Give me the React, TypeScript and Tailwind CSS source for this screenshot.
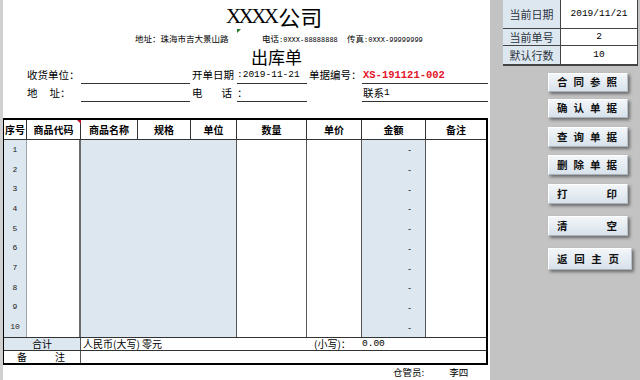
import React from 'react';

const cjk = "font-['Noto_Sans_CJK_SC',sans-serif]";
const mono = "font-['Liberation_Mono','Noto_Sans_CJK_SC',monospace]";

const rows = [1, 2, 3, 4, 5, 6, 7, 8, 9, 10];

const buttons: { chars: string[]; mt: string; h: string; w: string }[] = [
  { chars: ['合', '同', '参', '照'], mt: 'mt-[7px]', h: 'h-[19px]', w: 'w-[80px]' },
  { chars: ['确', '认', '单', '据'], mt: 'mt-[7px]', h: 'h-[19px]', w: 'w-[80px]' },
  { chars: ['查', '询', '单', '据'], mt: 'mt-[9px]', h: 'h-[20px]', w: 'w-[80px]' },
  { chars: ['删', '除', '单', '据'], mt: 'mt-[8px]', h: 'h-[20px]', w: 'w-[80px]' },
  { chars: ['打', '印'], mt: 'mt-[9px]', h: 'h-[20px]', w: 'w-[80px]' },
  { chars: ['清', '空'], mt: 'mt-[12px]', h: 'h-[20px]', w: 'w-[80px]' },
  { chars: ['返', '回', '主', '页'], mt: 'mt-[12px]', h: 'h-[22px]', w: 'w-[84px]' },
];

function HeaderCell({ w, label, last }: { w: string; label: string; last?: boolean }) {
  return (
    <div
      className={`${w} h-full flex items-center justify-center whitespace-nowrap text-[10px] font-bold text-black ${
        last ? '' : 'border-r border-[#333]'
      }`}
    >
      {label}
    </div>
  );
}

function Sheet() {
  return (
    <div className={`w-[487px] h-full bg-white flex flex-col ${cjk} text-black`}>
      {/* company title */}
      <div className="h-[32px] flex items-center pl-[223px] whitespace-nowrap">
        <span className="font-['Liberation_Serif',serif] text-[21px] tracking-[-2.6px] leading-none">XXXX</span>
        <span className="text-[22px] leading-none ml-[2px]">公司</span>
      </div>

      {/* address line */}
      <div className="relative h-[13px] flex items-center pl-[132px] text-[8.5px] leading-none whitespace-nowrap">
        <span className="w-[127px]">地址：珠海市吉大景山路</span>
        <span className="w-[85px]">
          电话<span className={`${mono} text-[7px]`}>:0XXX-88888888</span>
        </span>
        <span>
          传真<span className={`${mono} text-[7px]`}>:0XXX-99999999</span>
        </span>
        <span className="absolute left-[234px] top-[-3px] w-0 h-0 border-t-[4px] border-r-[4px] border-t-[#1f7a1f] border-r-transparent" />
      </div>

      {/* doc title */}
      <div className="h-[22px] flex items-center pl-[248px] text-[17px] leading-none">出库单</div>

      {/* form row 1 */}
      <div className="h-[17px] flex items-stretch text-[10.5px] leading-none whitespace-nowrap">
        <div className="w-[78px] flex items-center pl-[24px]">收货单位：</div>
        <div className="w-[109px] border-b border-[#333]" />
        <div className="w-[47px] flex items-center pl-[2px]">开单日期</div>
        <div className={`w-[70px] border-b border-[#333] flex items-center ${mono} text-[9.5px]`}>:2019-11-21</div>
        <div className="w-[55px] flex items-center pl-[2px]">单据编号：</div>
        <div className={`w-[126px] border-b border-[#333] flex items-center pl-[1px] ${mono} text-[10.5px] font-bold text-[#e3162b]`}>
          XS-191121-002
        </div>
      </div>

      {/* form row 2 */}
      <div className="mt-[1px] h-[17px] flex items-stretch text-[10.5px] leading-none whitespace-nowrap">
        <div className="w-[78px] flex items-center pl-[24px]">
          <span>地</span>
          <span className="ml-[12px]">址：</span>
        </div>
        <div className="w-[109px] border-b border-[#333]" />
        <div className="w-[47px] flex items-center pl-[2px]">
          <span>电</span>
          <span className="ml-[19px]">话</span>
        </div>
        <div className="w-[70px] border-b border-[#333] flex items-center">：</div>
        <div className="w-[55px]" />
        <div className="w-[126px] border-b border-[#333] flex items-center pl-[1px]">
          联系<span className={`${mono} text-[9.5px]`}>1</span>
        </div>
      </div>

      {/* table */}
      <div className="mt-[16px] w-[485px] border-t-2 border-l border-r-2 border-b-2 border-black">
        {/* header */}
        <div className="relative h-[20px] flex border-b border-[#333]">
          <HeaderCell w="w-[23px]" label="序号" />
          <HeaderCell w="w-[54px]" label="商品代码" />
          <HeaderCell w="w-[57px]" label="商品名称" />
          <HeaderCell w="w-[53px]" label="规格" />
          <HeaderCell w="w-[46px]" label="单位" />
          <HeaderCell w="w-[70px]" label="数量" />
          <HeaderCell w="w-[55px]" label="单价" />
          <HeaderCell w="w-[64px]" label="金额" />
          <HeaderCell w="w-[60px]" label="备注" last />
          <span className="absolute left-[73px] top-0 w-0 h-0 border-t-[4px] border-l-[4px] border-t-[#c0102a] border-l-transparent" />
        </div>

        {/* body */}
        <div className="h-[197px] flex">
          <div className="w-[23px] bg-[#dde7f0] border-r border-[#9aa4ad] flex flex-col">
            {rows.map((n) => (
              <div key={n} className={`flex-1 flex items-center justify-center ${mono} text-[8px] text-[#222]`}>
                {n}
              </div>
            ))}
          </div>
          <div className="w-[54px] border-r-2 border-[#6b6b6b]" />
          <div className="w-[156px] bg-[#dde7f0] border-r border-[#555]" />
          <div className="w-[70px] border-r border-[#555]" />
          <div className="w-[55px] border-r border-[#555]" />
          <div className="w-[64px] bg-[#dde7f0] border-r border-[#555] flex flex-col">
            {rows.map((n) => (
              <div key={n} className="flex-1 flex items-center justify-end pr-[14px] text-[9px] leading-none">
                -
              </div>
            ))}
          </div>
          <div className="w-[60px]" />
        </div>

        {/* total */}
        <div className="h-[13px] flex border-t border-[#333] text-[10px] leading-none whitespace-nowrap">
          <div className="w-[77px] bg-[#dde7f0] border-r border-[#555] flex items-center justify-center">合计</div>
          <div className="w-[226px] flex items-center pl-[2px]">人民币(大写) 零元</div>
          <div className="w-[55px] flex items-center pl-[7px]">(小写)：</div>
          <div className={`flex-1 flex items-center ${mono} text-[9.5px]`}>0.00</div>
        </div>

        {/* remark */}
        <div className="h-[13px] flex border-t border-[#333] text-[10px] leading-none">
          <div className="w-[77px] border-r border-[#555] flex items-center pl-[13px]">
            <span>备</span>
            <span className="ml-[28px]">注</span>
          </div>
          <div className="flex-1" />
        </div>
      </div>

      {/* keeper */}
      <div className="flex-1 flex items-center text-[9.5px] leading-none whitespace-nowrap">
        <span className="ml-[390px]">仓管员:</span>
        <span className="ml-[25px]">李四</span>
      </div>
    </div>
  );
}

function SidePanel() {
  return (
    <div className={`w-[150px] h-full flex flex-col ${cjk}`}>
      <div className="ml-[13px] w-[135px] border-b-2 border-[#444] text-[11px] leading-none whitespace-nowrap">
        <div className="h-[29px] flex border-b border-[#444]">
          <div className="w-[58px] bg-[#dde7f0] border-r border-[#444] flex items-center justify-center text-[#2c3440]">当前日期</div>
          <div className={`flex-1 bg-white border-r border-[#444] flex items-center justify-center ${mono} text-[9.5px]`}>2019/11/21</div>
        </div>
        <div className="h-[17px] flex border-b border-[#444]">
          <div className="w-[58px] bg-[#dde7f0] border-r border-[#444] flex items-center justify-center text-[#2c3440]">当前单号</div>
          <div className={`flex-1 bg-white border-r border-[#444] flex items-center justify-center ${mono} text-[9.5px]`}>2</div>
        </div>
        <div className="h-[18px] flex">
          <div className="w-[58px] bg-[#dde7f0] border-r border-[#444] flex items-center justify-center text-[#2c3440]">默认行数</div>
          <div className={`flex-1 bg-white border-r border-[#444] flex items-center justify-center ${mono} text-[9.5px]`}>10</div>
        </div>
      </div>

      {buttons.map((b) => (
        <button
          key={b.chars.join('')}
          type="button"
          className={`${b.mt} ${b.h} ${b.w} ml-[58px] flex items-center justify-between pl-[8px] ${
            b.w === 'w-[84px]' ? 'pr-[12px]' : 'pr-[10px]'
          } bg-linear-to-b from-[#f3f6f9] to-[#d8e2eb] border border-t-white border-l-white border-r-[#b9c2ca] border-b-[#aab3bb] shadow-[2px_2px_3px_rgba(0,0,0,0.45)] text-[10.5px] font-bold leading-none text-[#111]`}
        >
          {b.chars.map((c) => (
            <span key={c}>{c}</span>
          ))}
        </button>
      ))}
    </div>
  );
}

export default function App() {
  return (
    <div className="w-[640px] h-[380px] bg-[#c3c3c3] flex overflow-hidden">
      <div className="w-[3px] h-full bg-[#d0d0d0]" />
      <Sheet />
      <SidePanel />
    </div>
  );
}
